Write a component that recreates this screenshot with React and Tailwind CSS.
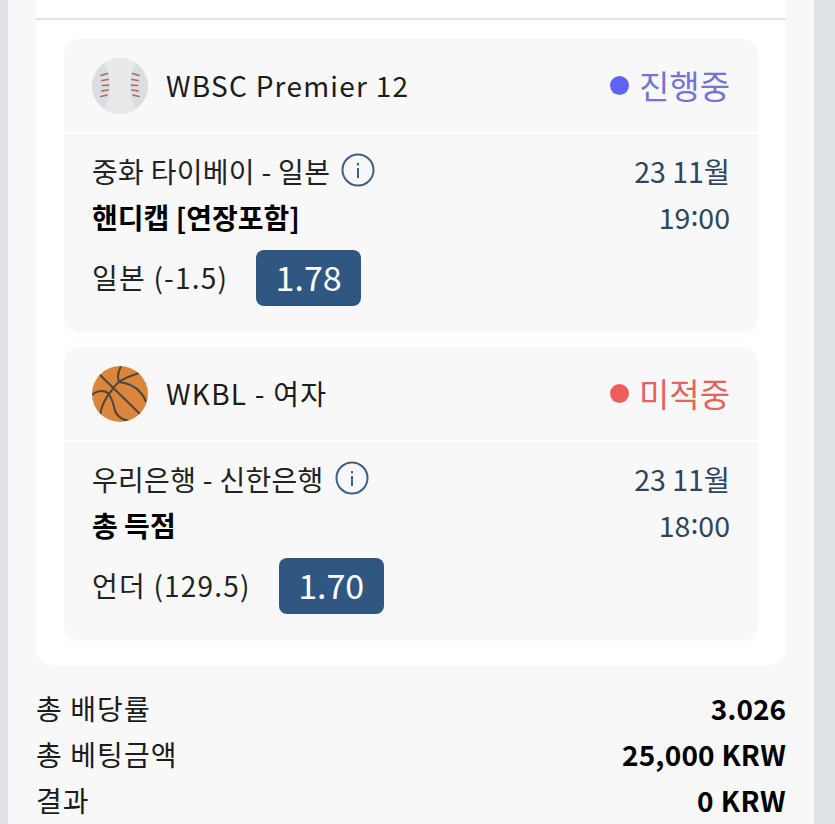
const FONT = "font-['Noto_Sans_CJK_KR','Noto_Sans',sans-serif]";

function Baseball() {
  const seams = [
    [9, 17.5, 15.500, 15.500], [10, 22.500, 16, 21.500], [10.500, 27.500, 16.500, 27], [10, 33, 16, 32], [9, 38.500, 15, 37],
  ];
  return (
    <svg width="56" height="56" viewBox="0 0 56 56" className="shrink-0">
      <circle cx="28" cy="28" r="28" fill="#d9dee2" />
      <path d="M12 5C20 18 20 38 12 51A28 28 0 0 0 44 51C36 38 36 18 44 5A28 28 0 0 0 12 5z" fill="#e8e9ea" />
      {seams.map(([x1, y1, x2, y2], i) => (
        <g key={i} stroke="#b9635a" strokeWidth="1.700" strokeLinecap="round">
          <line x1={x1} y1={y1} x2={x2} y2={y2} />
          <line x1={56 - x1} y1={y1} x2={56 - x2} y2={y2} />
        </g>
      ))}
    </svg>
  );
}

function Basketball() {
  return (
    <svg width="56" height="56" viewBox="0 0 56 56" className="shrink-0">
      <defs>
        <clipPath id="ball">
          <circle cx="28" cy="28" r="28" />
        </clipPath>
      </defs>
      <circle cx="28" cy="28" r="28" fill="#dc863b" />
      <g clipPath="url(#ball)" fill="none" stroke="#4b4741" strokeWidth="2">
        <path d="M8 9L48 48" />
        <path d="M29 0C26 6 25 11 27 16" />
        <path d="M47 7C38 10 31 13 27 16C24 18 22 21 20 24C14 31 9 40 8 50" />
        <path d="M27 16C35 17 43 20 48 26C51 29 53 32 54 36" />
        <path d="M0 29C3 26 7 25 10 25C13 25 15 26 17 28" />
        <path d="M16 27C19 31 21 36 22 41C23 47 26 53 37 55" />
      </g>
    </svg>
  );
}

function InfoIcon() {
  return (
    <svg width="34" height="34" viewBox="0 0 34 34" className="shrink-0">
      <circle cx="17" cy="17" r="15.500" fill="none" stroke="#3d5f85" strokeWidth="2" />
      <rect x="16" y="15" width="2" height="10" fill="#3d5f85" />
      <rect x="16" y="10" width="2" height="2.500" fill="#3d5f85" />
    </svg>
  );
}

function BetCard({ icon, league, status, statusText, statusDot, match, market, pick, odds, date, hour }) {
  return (
    <div className="rounded-2xl bg-[#f8f8f8] shadow-[0_6px_12px_rgba(0,0,0,0.015)]">
      <div className="flex h-[95px] items-center justify-between border-b-2 border-white px-7">
        <div className="flex items-center gap-[18px]">
          {icon}
          <span className="pb-[2px] text-[28px] leading-none tracking-[1.25px] text-[#1c1c1c]">{league}</span>
        </div>
        <div className={`flex items-center gap-[10px] text-[33px] leading-none ${statusText}`}>
          <span className={`h-[19px] w-[19px] rounded-full ${statusDot}`} />
          <span>{status}</span>
        </div>
      </div>
      <div className="flex justify-between px-7 pt-[18px] pb-[26px]">
        <div>
          <div className="flex h-[36px] items-center gap-[11px] text-[28px] tracking-[0.3px] text-[#222]">
            <span className="pt-[2px]">{match}</span>
            <InfoIcon />
          </div>
          <div className="mt-[11px] text-[28px] leading-[36px] font-bold text-black">{market}</div>
          <div className="mt-[15px] flex items-center gap-[28px]">
            <span className="pb-[2px] text-[28px] tracking-[1.2px] text-[#222]">{pick}</span>
            <span className="flex h-[56px] w-[105px] items-center justify-center rounded-lg bg-[#305782] pb-[4px] text-[34px] text-white">{odds}</span>
          </div>
        </div>
        <div className="-mt-[4px] text-right text-[28.500px] leading-[46px] text-[#2c4560]">
          <div>{date}</div>
          <div>
            {hour}
            <span className="inline-block -translate-y-[3px]">:</span>
            00
          </div>
        </div>
      </div>
    </div>
  );
}

function Summary({ label, value, spread }) {
  return (
    <div className="flex h-[46px] items-center justify-between text-[28px] text-[#1c1c1c]">
      <span className="tracking-[1.1px]">{label}</span>
      <span className={`font-bold text-black ${spread}`}>{value}</span>
    </div>
  );
}

export default function App() {
  return (
    <div className={`h-[824px] overflow-hidden bg-[#dfe2e7] pl-2 pr-[21px] ${FONT}`}>
      <div className="h-full bg-[#f8f8f8] px-7">
        <div className="rounded-b-2xl bg-white pb-[25px]">
          <div className="h-5 border-b-2 border-[#e2e5e9]" />
          <div className="mx-7 mt-[19px] flex flex-col gap-[15px]">
            <BetCard
              icon={<Baseball />}
              league="WBSC Premier 12"
              status="진행중"
              statusText="text-[#7473d6]"
              statusDot="bg-[#6262f5]"
              match="중화 타이베이 - 일본"
              market="핸디캡 [연장포함]"
              pick="일본 (-1.5)"
              odds="1.78"
              date="23 11월"
              hour="19"
            />
            <BetCard
              icon={<Basketball />}
              league="WKBL - 여자"
              status="미적중"
              statusText="text-[#e4635c]"
              statusDot="bg-[#ee5f5b]"
              match="우리은행 - 신한은행"
              market="총 득점"
              pick="언더 (129.5)"
              odds="1.70"
              date="23 11월"
              hour="18"
            />
          </div>
        </div>
        <div className="mt-5">
          <Summary label="총 배당률" value="3.026" spread="" />
          <Summary label="총 베팅금액" value="25,000 KRW" spread="tracking-[0.2px]" />
          <Summary label="결과" value="0 KRW" spread="tracking-[0.4px]" />
        </div>
      </div>
    </div>
  );
}
